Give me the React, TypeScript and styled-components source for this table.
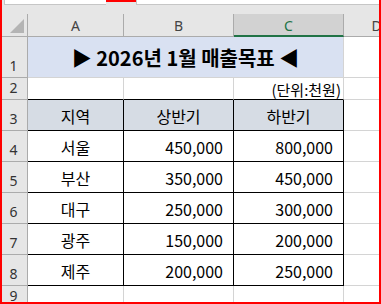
import React, {FC} from 'react'
import styled, {createGlobalStyle} from "styled-components";

const GRID = '#d4d4d4';
const HEAD_LINE = '#ababab';
const HEAD_BG = '#e6e6e6';
const INK = '#000';

const GlobalStyle = createGlobalStyle`
  html, body {
    margin: 0;
    padding: 0;
    background: #fff;
  }
  body {
    font-family: "Noto Sans", "Noto Sans CJK KR", sans-serif;
  }
`;

const Frame = styled.div`
  width: 381px;
  height: 304px;
  box-sizing: border-box;
  border-left: 2px solid #ff0000;
  border-right: 2px solid #ff0000;
  border-bottom: 2px solid #ff0000;
  overflow: hidden;
  display: flex;
  flex-direction: column;
  background: #fff;
`;

const TopStrip = styled.div`
  height: 14px;
  flex: none;
  display: flex;
  background: ${HEAD_BG};
`;

const InputBox = styled.div<{ $width?: number }>`
  box-sizing: border-box;
  height: 5px;
  background: #fff;
  border-left: 1px solid #c6c6c6;
  border-bottom: 1px solid #c6c6c6;
  ${p => p.$width ? `width: ${p.$width}px;` : 'flex: 1;'}
`;

const StripGap = styled.div<{ $width: number }>`
  width: ${p => p.$width}px;
  height: 2px;
  background: ${p => p.$width > 10 ? '#ff0000' : 'transparent'};
`;

const Sheet = styled.div`
  display: grid;
  grid-template-columns: 26px 96px 110px 110px 66px;
  grid-template-rows: 23px 41px 22px repeat(6, 31px) 22px;
  flex: none;
`;

const Corner = styled.div`
  box-sizing: border-box;
  background: ${HEAD_BG};
  border-right: 1px solid ${HEAD_LINE};
  border-bottom: 1px solid ${HEAD_LINE};
  display: flex;
  justify-content: flex-end;
  align-items: flex-end;
  padding: 0 3px 3px 0;
`;

const SelectAll = styled.div`
  width: 0;
  height: 0;
  border-left: 14px solid transparent;
  border-bottom: 14px solid #b4b4b4;
`;

const ColHead = styled.div<{ $active?: boolean }>`
  box-sizing: border-box;
  display: flex;
  align-items: center;
  justify-content: center;
  background: ${p => p.$active ? '#d2d2d2' : HEAD_BG};
  border-right: 1px solid ${HEAD_LINE};
  border-bottom: ${p => p.$active ? '2px solid #217346' : `1px solid ${HEAD_LINE}`};
  color: ${p => p.$active ? '#217346' : '#444'};
  font-size: 14px;
  padding-top: ${p => p.$active ? 1 : 0}px;
`;

const RowHead = styled.div`
  box-sizing: border-box;
  display: flex;
  align-items: flex-end;
  justify-content: center;
  background: ${HEAD_BG};
  border-right: 1px solid ${HEAD_LINE};
  border-bottom: 1px solid ${HEAD_LINE};
  color: #333;
  font-size: 14px;
  line-height: 1;
  padding: 0 2px 4px 0;
`;

type Align = 'left' | 'center' | 'right';

const Cell = styled.div<{
    $bg?: string;
    $right?: string;
    $bottom?: string;
    $align?: Align;
    $span?: number;
    $size?: number;
    $bold?: boolean;
    $padRight?: number;
}>`
  box-sizing: border-box;
  display: flex;
  align-items: center;
  justify-content: ${p => p.$align === 'right' ? 'flex-end' : p.$align === 'center' ? 'center' : 'flex-start'};
  grid-column: span ${p => p.$span ?? 1};
  background: ${p => p.$bg ?? '#fff'};
  border-right: 1px solid ${p => p.$right ?? GRID};
  border-bottom: 1px solid ${p => p.$bottom ?? GRID};
  font-family: "Noto Sans CJK KR", "Noto Sans", sans-serif;
  font-size: ${p => p.$size ?? 16}px;
  font-weight: ${p => p.$bold ? 700 : 400};
  color: ${INK};
  white-space: nowrap;
  padding: 1px ${p => p.$padRight ?? 10}px 0 10px;
  line-height: 1;
`;

const columns = ['A', 'B', 'C', 'D'];

interface Sales {
    region: string;
    first: string;
    second: string;
}

const rows: Sales[] = [
    {region: '서울', first: '450,000', second: '800,000'},
    {region: '부산', first: '350,000', second: '450,000'},
    {region: '대구', first: '250,000', second: '300,000'},
    {region: '광주', first: '150,000', second: '200,000'},
    {region: '제주', first: '200,000', second: '250,000'},
];

const TABLE_LINE = '#000';

const App: FC = () => {
    return (
        <>
            <GlobalStyle/>
            <Frame>
                <TopStrip>
                    <StripGap $width={2}/>
                    <InputBox $width={102}/>
                    <StripGap $width={30}/>
                    <InputBox/>
                </TopStrip>
                <Sheet>
                    <Corner><SelectAll/></Corner>
                    {columns.map(c => (
                        <ColHead key={c} $active={c === 'C'}>{c}</ColHead>
                    ))}

                    {/* row 1: merged title A1:C1 */}
                    <RowHead>1</RowHead>
                    <Cell $span={3} $bg="#d9e1f2" $align="center" $size={20} $bold>
                        ▶ 2026년 1월 매출목표 ◀
                    </Cell>
                    <Cell/>

                    {/* row 2: unit note */}
                    <RowHead>2</RowHead>
                    <Cell $bottom={TABLE_LINE}/>
                    <Cell $bottom={TABLE_LINE}/>
                    <Cell $bottom={TABLE_LINE} $align="right" $size={15} $padRight={2}>
                        (단위:천원)
                    </Cell>
                    <Cell/>

                    {/* row 3: table head */}
                    <RowHead>3</RowHead>
                    {['지역', '상반기', '하반기'].map(h => (
                        <Cell key={h} $bg="#d6dce4" $align="center" $right={TABLE_LINE} $bottom={TABLE_LINE}>
                            {h}
                        </Cell>
                    ))}
                    <Cell/>

                    {rows.map((r, i) => (
                        <React.Fragment key={r.region}>
                            <RowHead>{i + 4}</RowHead>
                            <Cell $align="center" $right={TABLE_LINE} $bottom={TABLE_LINE}>{r.region}</Cell>
                            <Cell $align="right" $right={TABLE_LINE} $bottom={TABLE_LINE}>{r.first}</Cell>
                            <Cell $align="right" $right={TABLE_LINE} $bottom={TABLE_LINE}>{r.second}</Cell>
                            <Cell/>
                        </React.Fragment>
                    ))}

                    <RowHead>9</RowHead>
                    <Cell/>
                    <Cell/>
                    <Cell/>
                    <Cell/>
                </Sheet>
            </Frame>
        </>
    );
};

export default App;
